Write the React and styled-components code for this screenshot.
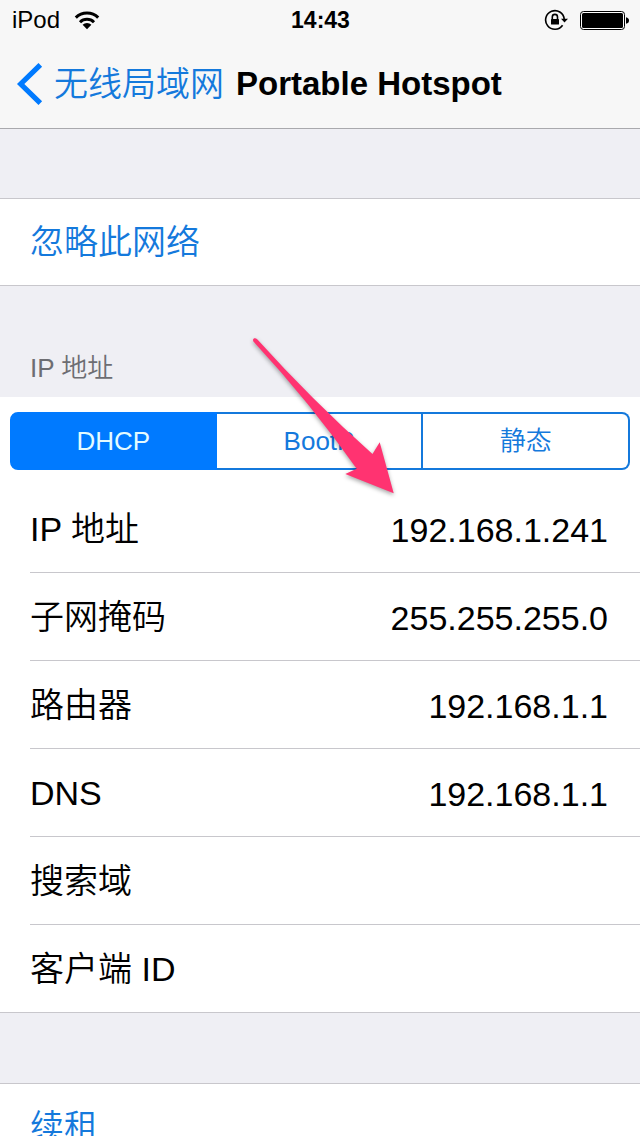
import React, { useState } from "react";
import styled, { createGlobalStyle } from "styled-components";

const blue = "#007aff";
const linkBlue = "#1479dc";
const hairline = "#c8c7cc";

const GlobalStyle = createGlobalStyle`
  * { box-sizing: border-box; }
  body {
    margin: 0;
    background: #efeff4;
    color: #000;
    font-family: "Liberation Sans", "Noto Sans CJK SC", sans-serif;
    font-weight: 350;
  }
  button { font: inherit; border: 0; margin: 0; padding: 0; background: none; cursor: pointer; }
`;

const Screen = styled.div`
  height: 100vh;
  display: flex;
  flex-direction: column;
  overflow: hidden;
`;

const Header = styled.header`
  flex: none;
  background: #f7f7f7;
  border-bottom: 1px solid #a9a9ad;
`;

const StatusBar = styled.div`
  display: grid;
  grid-template-columns: 1fr auto 1fr;
  align-items: center;
  height: 40px;
  padding: 0 11px 0 12px;
  font-size: 24px;
  line-height: 40px;
`;

const StatusGroup = styled.div`
  display: flex;
  align-items: center;
  justify-content: ${(p) => (p.$end ? "flex-end" : "flex-start")};
  gap: ${(p) => (p.$end ? 12 : 14)}px;
`;

const Clock = styled.time`
  font-size: 23px;
  font-weight: 700;
`;

const NavBar = styled.nav`
  display: flex;
  align-items: center;
  height: 88px;
  padding-left: 16px;
  gap: 12px;
`;

const BackButton = styled.button`
  display: flex;
  align-items: center;
  gap: 10px;
  color: ${linkBlue};
  font-size: 34px;
  line-height: 48px;
  white-space: nowrap;
`;

const Title = styled.h1`
  margin: 0;
  font-size: 33px;
  line-height: 48px;
  font-weight: 700;
  white-space: nowrap;
`;

const Content = styled.main`
  flex: 1;
  min-height: 0;
  overflow-y: auto;
  scrollbar-width: none;
`;

const Group = styled.section`
  position: relative;
  margin-top: ${(p) => p.$gap || 0}px;
  background: #fff;
  border-bottom: 1px solid ${hairline};
  ${(p) => p.$topLine && `border-top: 1px solid ${hairline};`}
`;

const ActionRow = styled.button`
  display: block;
  width: 100%;
  height: 86px;
  padding: 0 30px;
  text-align: left;
  color: ${linkBlue};
  font-size: 34px;
  line-height: 86px;
`;

const GroupTitle = styled.h2`
  margin: 0;
  padding: 62px 30px 9px;
  color: #6d6d72;
  font-size: 26px;
  line-height: 40px;
  font-weight: 350;
`;

const Segments = styled.div`
  display: grid;
  grid-template-columns: repeat(3, 1fr);
  padding: 15px 10px;
`;

const Segment = styled.button`
  && {
    height: 58px;
    border: 2px solid ${(p) => (p.$active ? blue : linkBlue)};
    border-left-width: ${(p) => (p.$first ? 2 : 0)}px;
    border-radius: ${(p) => (p.$first ? "8px 0 0 8px" : p.$last ? "0 8px 8px 0" : 0)};
    background: ${(p) => (p.$active ? blue : "#fff")};
    color: ${(p) => (p.$active ? "#e4fbff" : linkBlue)};
    font-size: 26px;
    line-height: 54px;
  }
`;

const Details = styled.dl`
  margin: 0;
  padding-left: 30px;
`;

const DetailRow = styled.div`
  display: flex;
  justify-content: space-between;
  height: 88px;
  padding-right: 32px;
  border-bottom: 1px solid ${hairline};
  font-size: 34px;
  line-height: 88px;

  &:last-child {
    height: 87px;
    border-bottom: 0;
  }
`;

const Label = styled.dt``;

const Value = styled.dd`
  margin: 0;
  line-height: 90px;
`;

const Pointer = styled.svg`
  position: absolute;
  left: 248px;
  top: -62px;
  pointer-events: none;
  filter: drop-shadow(0 2px 2px rgba(0, 0, 0, 0.35));
`;

const WifiIcon = () => (
  <svg width="26" height="20" viewBox="0 0 26 20" fill="none" stroke="#000" strokeWidth="3" aria-hidden="true">
    <path d="M1.8 7.6a15.8 15.8 0 0 1 22.4 0" />
    <path d="M6 12.2a10 10 0 0 1 14 0" />
    <path d="M8.6 14.8a6.4 6.4 0 0 1 8.8 0L13 19.3z" fill="#000" stroke="none" />
  </svg>
);

const RotationLockIcon = () => (
  <svg width="24" height="22" viewBox="0 0 24 22" fill="none" stroke="#000" strokeWidth="1.6" aria-hidden="true">
    <path d="M20.2 10.2A9.3 9.3 0 1 0 18.6 16.2" />
    <path d="M17 9.8h7l-3.5 3.6z" fill="#000" stroke="none" />
    <path d="M8.3 10.5V8a2.6 2.6 0 0 1 5.2 0v2.5" />
    <rect x="7" y="10" width="8" height="5.6" rx="0.6" fill="#000" stroke="none" />
  </svg>
);

const BatteryIcon = () => (
  <svg width="49" height="20" viewBox="0 0 49 20" aria-hidden="true">
    <rect x="0.5" y="1.5" width="44" height="18" rx="3" fill="#fff" stroke="#000" />
    <rect x="2" y="3" width="41" height="15" rx="1.5" fill="#000" />
    <path d="M46 7.2c2 .4 3 1.6 3 3.3s-1 2.9-3 3.3z" fill="#000" />
  </svg>
);

const BackIcon = () => (
  <svg width="28" height="44" viewBox="0 0 28 44" fill="none" stroke={blue} strokeWidth="5.2" aria-hidden="true">
    <path d="M24.3 2.8 4.7 22l19.6 19.2" />
  </svg>
);

const modes = ["DHCP", "BootP", "静态"];

const details = [
  ["IP 地址", "192.168.1.241"],
  ["子网掩码", "255.255.255.0"],
  ["路由器", "192.168.1.1"],
  ["DNS", "192.168.1.1"],
  ["搜索域", ""],
  ["客户端 ID", ""],
];

export default function App() {
  const [mode, setMode] = useState("DHCP");

  return (
    <Screen lang="zh-CN">
      <GlobalStyle />
      <Header>
        <StatusBar>
          <StatusGroup>
            <span>iPod</span>
            <WifiIcon />
          </StatusGroup>
          <Clock>14:43</Clock>
          <StatusGroup $end>
            <RotationLockIcon />
            <BatteryIcon />
          </StatusGroup>
        </StatusBar>
        <NavBar>
          <BackButton type="button">
            <BackIcon />
            无线局域网
          </BackButton>
          <Title>Portable Hotspot</Title>
        </NavBar>
      </Header>
      <Content>
        <Group $gap={69} $topLine>
          <ActionRow type="button">忽略此网络</ActionRow>
        </Group>
        <GroupTitle>IP 地址</GroupTitle>
        <Group>
          <Segments role="group" aria-label="IP 地址">
            {modes.map((name, i) => (
              <Segment
                key={name}
                type="button"
                aria-pressed={mode === name}
                $active={mode === name}
                $first={i === 0}
                $last={i === modes.length - 1}
                onClick={() => setMode(name)}
              >
                {name}
              </Segment>
            ))}
          </Segments>
          <Details>
            {details.map(([label, value]) => (
              <DetailRow key={label}>
                <Label>{label}</Label>
                <Value>{value}</Value>
              </DetailRow>
            ))}
          </Details>
          <Pointer width="152" height="164" viewBox="0 0 152 164" aria-hidden="true">
            <path
              d="M5.4 6.5C4 3.5 7 2.2 9.2 4.2Q64 65 124.500 119L131.700 107.300L145.700 158.300L97.300 139L108.700 133.700Q61.500 67 5.400 6.500Z"
              fill="#ff3371"
            />
          </Pointer>
        </Group>
        <Group $gap={70} $topLine>
          <ActionRow type="button">续租</ActionRow>
        </Group>
      </Content>
    </Screen>
  );
}
